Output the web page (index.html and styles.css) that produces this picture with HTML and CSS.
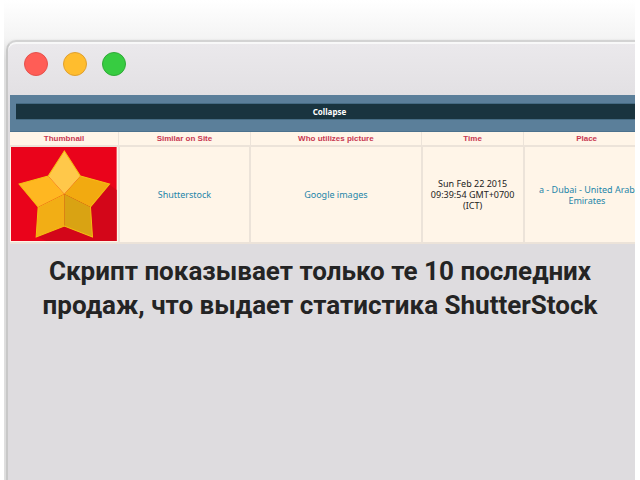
FILE: index.html
```
<!DOCTYPE html>
<html lang="ru">
<head>
<meta charset="utf-8">
<title>ShutterStock</title>
<link rel="stylesheet" href="styles.css">
</head>
<body>
<div class="stage">
  <main class="window">
    <div class="titlebar">
      <span class="dot red"></span>
      <span class="dot yellow"></span>
      <span class="dot green"></span>
    </div>
    <div class="panel">
      <div class="bar"><button class="collapse" type="button">Collapse</button></div>
      <table class="sales">
        <colgroup><col class="c-thumb"><col class="c-site"><col class="c-who"><col class="c-time"><col class="c-place"></colgroup>
        <thead>
          <tr><th>Thumbnail</th><th>Similar on Site</th><th>Who utilizes picture</th><th>Time</th><th>Place</th></tr>
        </thead>
        <tbody>
          <tr>
            <td class="thumb">
              <svg class="star" viewBox="0 0 105 94" preserveAspectRatio="none" aria-hidden="true">
                <rect width="105" height="94" fill="#ea031b"/>
                <path d="M97 37L105 43V94H35L25 89L53 47Z" fill="#d30619"/>
                <path d="M53 4L37 29L53 47L69 29Z" fill="#ffc84a"/>
                <path d="M8 37L37 29L53 47L27 60Z" fill="#ffb721"/>
                <path d="M98 37L69 29L53 47L79 60Z" fill="#f2aa10"/>
                <path d="M27 60L53 47V79L25 90Z" fill="#f2ae15"/>
                <path d="M79 60L53 47V79L81 90Z" fill="#d9a313"/>
                <path d="M53 4L37 29L8 37L27 60L25 90L53 79L81 90L79 60L98 37L69 29Z" fill="none" stroke="#f5bf12" stroke-width="1"/>
              </svg>
            </td>
            <td><a href="#site">Shutterstock</a></td>
            <td><a href="#images">Google images</a></td>
            <td>Sun Feb 22 2015<br>09:39:54 GMT+0700<br>(ICT)</td>
            <td><a href="#place">a - Dubai - United Arab<br>Emirates</a></td>
          </tr>
        </tbody>
      </table>
    </div>
    <h1 class="caption">Скрипт показывает только те 10 последних<br>продаж, что выдает статистика ShutterStock</h1>
  </main>
</div>
</body>
</html>
```
FILE: styles.css
```
* { box-sizing: border-box; }

body {
  margin: 0;
  background: #fff;
  font-family: "Noto Sans", "Open Sans", sans-serif;
}

.stage {
  min-height: 100vh;
  margin: 0 5px 0 4px;
  padding: 40px 0 0 2px;
  display: flex;
  overflow: hidden;
  background: linear-gradient(#fff, #f4f4f4 38px, #dfdfdf 60px);
}

.window {
  flex: 1;
  min-width: 0;
  border-top: 2px solid #d3d3d3;
  border-left: 2px solid #c8c8c8;
  border-top-left-radius: 10px;
  background: linear-gradient(#ebe9ec, #dedcdf 80px);
  box-shadow: inset 0 2px #f8f8f8, 0 0 2px #dcdcdc;
}

.titlebar {
  display: flex;
  gap: 15px;
  height: 53px;
  padding: 10px 16px;
}

.dot {
  width: 24px;
  height: 24px;
  border: 1px solid;
  border-radius: 50%;
}

.red { background: #ff5d56; border-color: #e5514c; }
.yellow { background: #ffbd2e; border-color: #dfa030; }
.green { background: #37cc41; border-color: #30aa38; }

.panel {
  margin: 0 -14px 0 2px;
}

.bar {
  height: 37px;
  padding: 8px 6px;
  background: #5b7f9a;
  border-bottom: 1px solid #4b718d;
}

.collapse {
  display: block;
  width: 100%;
  height: 17px;
  padding: 0;
  border: 1px solid #456b83;
  border-width: 1px 0;
  background: #19343f;
  color: #fff;
  font: bold 8px/13px "Noto Sans", sans-serif;
}

.sales {
  width: 100%;
  table-layout: fixed;
  border-collapse: collapse;
  background: #fff5e8;
  color: #222;
  font-size: 9px;
  line-height: 11px;
  text-align: center;
}

.c-thumb { width: 17%; }
.c-site { width: 20.6%; }
.c-who { width: 26.8%; }
.c-time { width: 16%; }

.sales th,
.sales td {
  padding: 0;
  border: solid #ece3d9;
  border-width: 0 0 2px 1px;
}

.sales th:first-child,
.sales td:first-child { border-left: 0; }

.sales th {
  height: 14px;
  color: #c73752;
  font: bold 8px/12px "Liberation Sans", sans-serif;
}

.sales td {
  height: 97px;
  border-left-width: 2px;
}

.sales .thumb {
  padding: 0 1px;
  vertical-align: top;
}

.sales a {
  color: #2485a8;
  text-decoration: none;
}

.star {
  display: block;
  width: 100%;
  height: 94px;
}

.caption {
  margin: 10px 0 0;
  padding-right: 3px;
  color: #242424;
  font: bold 26px/34px Roboto, "Liberation Sans", sans-serif;
  text-align: center;
}
```
